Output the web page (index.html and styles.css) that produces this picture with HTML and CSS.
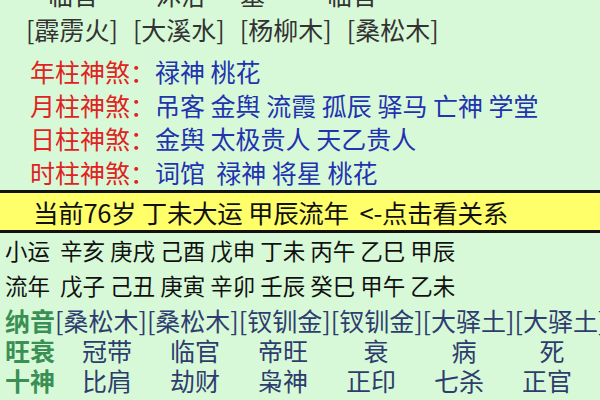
FILE: index.html
```html
<!DOCTYPE html>
<html lang="zh-CN">
<head>
<meta charset="utf-8">
<link rel="stylesheet" href="styles.css">
</head>
<body>
<div class="page">
  <div class="row dishi">
    <span class="ds ds1">临官</span><span class="ds ds2">沐浴</span><span class="ds ds3">墓</span><span class="ds ds4">临官</span>
  </div>
  <div class="row nayin">
    <span class="ny">[霹雳火]</span><span class="ny">[大溪水]</span><span class="ny">[杨柳木]</span><span class="ny">[桑松木]</span>
  </div>
  <div class="shensha">
    <div class="ss"><span class="lab">年柱神煞：</span><span class="val">禄神 桃花</span></div>
    <div class="ss"><span class="lab">月柱神煞：</span><span class="val">吊客 金舆 流霞 孤辰 驿马 亡神 学堂</span></div>
    <div class="ss"><span class="lab">日柱神煞：</span><span class="val">金舆 太极贵人 天乙贵人</span></div>
    <div class="ss"><span class="lab">时柱神煞：</span><span class="val">词馆&nbsp; 禄神 将星 桃花</span></div>
  </div>
  <div class="bar">当前76岁 丁未大运 甲辰流年&nbsp; &lt;-点击看关系</div>
  <div class="yun r1">小运&nbsp; 辛亥 庚戌 己酉 戊申 丁未 丙午 乙巳 甲辰</div>
  <div class="yun r2">流年&nbsp; 戊子 己丑 庚寅 辛卯 壬辰 癸巳 甲午 乙未</div>
  <div class="grid-row">
    <span class="glab">纳音</span><span class="nytxt">[桑松木][桑松木][钗钏金][钗钏金][大驿土][大驿土][</span>
  </div>
  <div class="grid-row">
    <span class="glab">旺衰</span>
    <div class="cols">
      <span class="c">冠带</span><span class="c">临官</span><span class="c">帝旺</span><span class="c one">衰</span><span class="c one">病</span><span class="c one">死</span>
    </div>
  </div>
  <div class="grid-row">
    <span class="glab">十神</span>
    <div class="cols">
      <span class="c">比肩</span><span class="c">劫财</span><span class="c">枭神</span><span class="c">正印</span><span class="c">七杀</span><span class="c">正官</span>
    </div>
  </div>
</div>
</body>
</html>
```

FILE: styles.css
```css
html, body {
  margin: 0;
  padding: 0;
  background: #d8f9d8;
  width: 600px;
  height: 400px;
  overflow: hidden;
}
.page {
  font-family: "Noto Sans CJK SC", "Noto Sans", sans-serif;
  font-size: 25px;
  color: #222;
  white-space: nowrap;
}
.row {
  display: flex;
}
.dishi {
  margin-top: -23px;
  height: 34px;
  line-height: 34px;
  color: #333;
}
.ds1 { margin-left: 48px; }
.ds2 { margin-left: 58px; }
.ds3 { margin-left: 34px; }
.ds4 { margin-left: 62px; }
.nayin {
  height: 37px;
  line-height: 37px;
  padding-left: 26px;
  gap: 15px;
  color: #333;
}
.shensha {
  margin-top: 7px;
  padding-left: 30px;
}
.ss {
  height: 33.5px;
  line-height: 33.5px;
}
.lab { color: #e02222; }
.val { color: #2233b0; }
.bar {
  margin-top: 1px;
  height: 37px;
  line-height: 37px;
  background: #ffff6a;
  border-top: 3px solid #111;
  border-bottom: 3px solid #111;
  padding-left: 33px;
  font-size: 25.5px;
  letter-spacing: -0.3px;
  color: #111;
}
.yun {
  padding-left: 5px;
  font-size: 22.5px;
  color: #111;
}
.r1 { height: 35px; line-height: 35px; }
.r2 { height: 37px; line-height: 35px; }
.grid-row {
  display: flex;
  height: 30px;
  line-height: 30px;
  padding-left: 5px;
}
.glab {
  color: #3a8f55;
  font-weight: bold;
}
.nytxt {
  color: #2e3d6e;
}
.cols {
  display: grid;
  grid-template-columns: repeat(6, 88px);
  margin-left: 8px;
  color: #2e3d6e;
}
.c {
  text-align: center;
}
.c.one {
  padding-left: 10px;
}
```
